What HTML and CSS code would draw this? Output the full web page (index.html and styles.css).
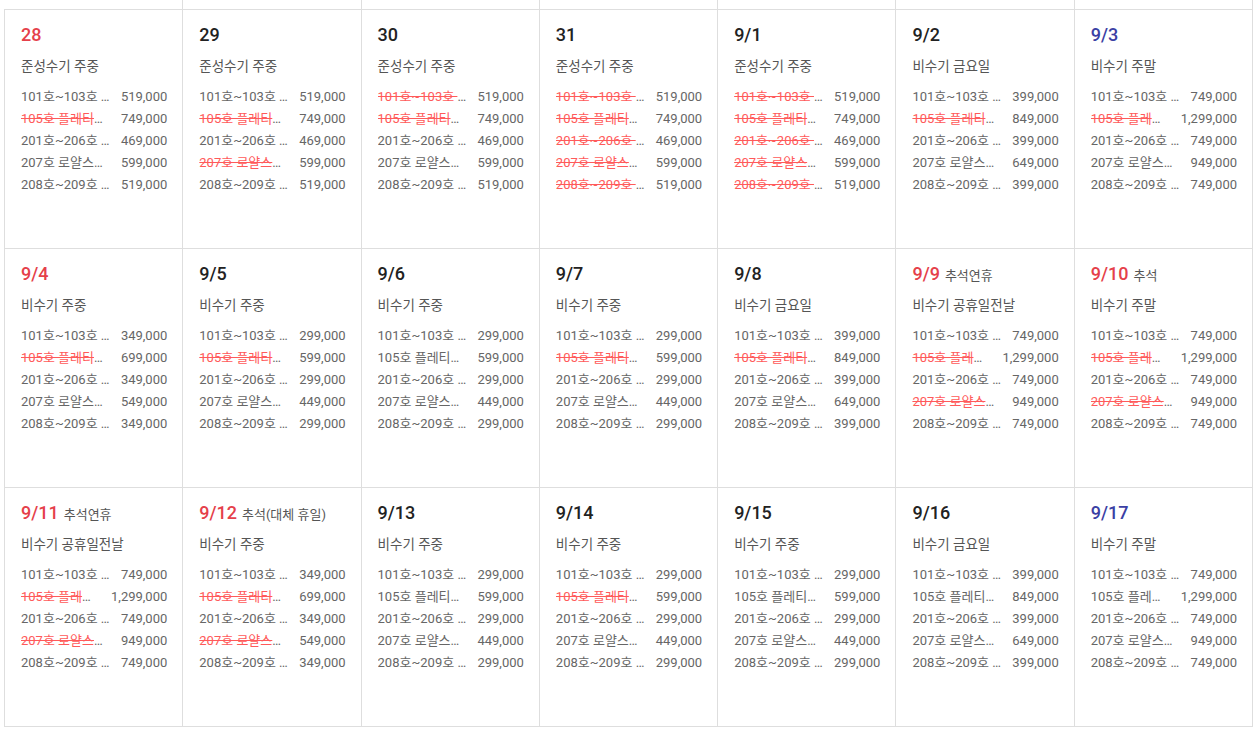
FILE: index.html
```html
<!DOCTYPE html>
<html lang="ko">
<head>
<meta charset="utf-8">
<title>요금 달력</title>
<link rel="stylesheet" href="styles.css">
</head>
<body>
<div class="calendar">
  <div class="strip"><span></span><span></span><span></span><span></span><span></span><span></span><span></span></div>
  <div class="grid">
    <!-- week 1 -->
    <div class="cell">
      <div class="day"><span class="num sun">28</span></div>
      <div class="season">준성수기 주중</div>
      <ul class="rates">
        <li><span class="room">101호~103호 스탠다드</span><span class="price">519,000</span></li>
        <li><span class="room"><s>105호 플레티넘 스위트</s></span><span class="price">749,000</span></li>
        <li><span class="room">201호~206호 스탠다드</span><span class="price">469,000</span></li>
        <li><span class="room">207호 로얄스위트</span><span class="price">599,000</span></li>
        <li><span class="room">208호~209호 패밀리</span><span class="price">519,000</span></li>
      </ul>
    </div>
    <div class="cell">
      <div class="day"><span class="num">29</span></div>
      <div class="season">준성수기 주중</div>
      <ul class="rates">
        <li><span class="room">101호~103호 스탠다드</span><span class="price">519,000</span></li>
        <li><span class="room"><s>105호 플레티넘 스위트</s></span><span class="price">749,000</span></li>
        <li><span class="room">201호~206호 스탠다드</span><span class="price">469,000</span></li>
        <li><span class="room"><s>207호 로얄스위트</s></span><span class="price">599,000</span></li>
        <li><span class="room">208호~209호 패밀리</span><span class="price">519,000</span></li>
      </ul>
    </div>
    <div class="cell">
      <div class="day"><span class="num">30</span></div>
      <div class="season">준성수기 주중</div>
      <ul class="rates">
        <li><span class="room"><s>101호~103호 스탠다드</s></span><span class="price">519,000</span></li>
        <li><span class="room"><s>105호 플레티넘 스위트</s></span><span class="price">749,000</span></li>
        <li><span class="room">201호~206호 스탠다드</span><span class="price">469,000</span></li>
        <li><span class="room">207호 로얄스위트</span><span class="price">599,000</span></li>
        <li><span class="room">208호~209호 패밀리</span><span class="price">519,000</span></li>
      </ul>
    </div>
    <div class="cell">
      <div class="day"><span class="num">31</span></div>
      <div class="season">준성수기 주중</div>
      <ul class="rates">
        <li><span class="room"><s>101호~103호 스탠다드</s></span><span class="price">519,000</span></li>
        <li><span class="room"><s>105호 플레티넘 스위트</s></span><span class="price">749,000</span></li>
        <li><span class="room"><s>201호~206호 스탠다드</s></span><span class="price">469,000</span></li>
        <li><span class="room"><s>207호 로얄스위트</s></span><span class="price">599,000</span></li>
        <li><span class="room"><s>208호~209호 패밀리</s></span><span class="price">519,000</span></li>
      </ul>
    </div>
    <div class="cell">
      <div class="day"><span class="num">9/1</span></div>
      <div class="season">준성수기 주중</div>
      <ul class="rates">
        <li><span class="room"><s>101호~103호 스탠다드</s></span><span class="price">519,000</span></li>
        <li><span class="room"><s>105호 플레티넘 스위트</s></span><span class="price">749,000</span></li>
        <li><span class="room"><s>201호~206호 스탠다드</s></span><span class="price">469,000</span></li>
        <li><span class="room"><s>207호 로얄스위트</s></span><span class="price">599,000</span></li>
        <li><span class="room"><s>208호~209호 패밀리</s></span><span class="price">519,000</span></li>
      </ul>
    </div>
    <div class="cell">
      <div class="day"><span class="num">9/2</span></div>
      <div class="season">비수기 금요일</div>
      <ul class="rates">
        <li><span class="room">101호~103호 스탠다드</span><span class="price">399,000</span></li>
        <li><span class="room"><s>105호 플레티넘 스위트</s></span><span class="price">849,000</span></li>
        <li><span class="room">201호~206호 스탠다드</span><span class="price">399,000</span></li>
        <li><span class="room">207호 로얄스위트</span><span class="price">649,000</span></li>
        <li><span class="room">208호~209호 패밀리</span><span class="price">399,000</span></li>
      </ul>
    </div>
    <div class="cell">
      <div class="day"><span class="num sat">9/3</span></div>
      <div class="season">비수기 주말</div>
      <ul class="rates">
        <li><span class="room">101호~103호 스탠다드</span><span class="price">749,000</span></li>
        <li><span class="room"><s>105호 플레티넘 스위트</s></span><span class="price">1,299,000</span></li>
        <li><span class="room">201호~206호 스탠다드</span><span class="price">749,000</span></li>
        <li><span class="room">207호 로얄스위트</span><span class="price">949,000</span></li>
        <li><span class="room">208호~209호 패밀리</span><span class="price">749,000</span></li>
      </ul>
    </div>

    <!-- week 2 -->
    <div class="cell">
      <div class="day"><span class="num sun">9/4</span></div>
      <div class="season">비수기 주중</div>
      <ul class="rates">
        <li><span class="room">101호~103호 스탠다드</span><span class="price">349,000</span></li>
        <li><span class="room"><s>105호 플레티넘 스위트</s></span><span class="price">699,000</span></li>
        <li><span class="room">201호~206호 스탠다드</span><span class="price">349,000</span></li>
        <li><span class="room">207호 로얄스위트</span><span class="price">549,000</span></li>
        <li><span class="room">208호~209호 패밀리</span><span class="price">349,000</span></li>
      </ul>
    </div>
    <div class="cell">
      <div class="day"><span class="num">9/5</span></div>
      <div class="season">비수기 주중</div>
      <ul class="rates">
        <li><span class="room">101호~103호 스탠다드</span><span class="price">299,000</span></li>
        <li><span class="room"><s>105호 플레티넘 스위트</s></span><span class="price">599,000</span></li>
        <li><span class="room">201호~206호 스탠다드</span><span class="price">299,000</span></li>
        <li><span class="room">207호 로얄스위트</span><span class="price">449,000</span></li>
        <li><span class="room">208호~209호 패밀리</span><span class="price">299,000</span></li>
      </ul>
    </div>
    <div class="cell">
      <div class="day"><span class="num">9/6</span></div>
      <div class="season">비수기 주중</div>
      <ul class="rates">
        <li><span class="room">101호~103호 스탠다드</span><span class="price">299,000</span></li>
        <li><span class="room">105호 플레티넘 스위트</span><span class="price">599,000</span></li>
        <li><span class="room">201호~206호 스탠다드</span><span class="price">299,000</span></li>
        <li><span class="room">207호 로얄스위트</span><span class="price">449,000</span></li>
        <li><span class="room">208호~209호 패밀리</span><span class="price">299,000</span></li>
      </ul>
    </div>
    <div class="cell">
      <div class="day"><span class="num">9/7</span></div>
      <div class="season">비수기 주중</div>
      <ul class="rates">
        <li><span class="room">101호~103호 스탠다드</span><span class="price">299,000</span></li>
        <li><span class="room"><s>105호 플레티넘 스위트</s></span><span class="price">599,000</span></li>
        <li><span class="room">201호~206호 스탠다드</span><span class="price">299,000</span></li>
        <li><span class="room">207호 로얄스위트</span><span class="price">449,000</span></li>
        <li><span class="room">208호~209호 패밀리</span><span class="price">299,000</span></li>
      </ul>
    </div>
    <div class="cell">
      <div class="day"><span class="num">9/8</span></div>
      <div class="season">비수기 금요일</div>
      <ul class="rates">
        <li><span class="room">101호~103호 스탠다드</span><span class="price">399,000</span></li>
        <li><span class="room"><s>105호 플레티넘 스위트</s></span><span class="price">849,000</span></li>
        <li><span class="room">201호~206호 스탠다드</span><span class="price">399,000</span></li>
        <li><span class="room">207호 로얄스위트</span><span class="price">649,000</span></li>
        <li><span class="room">208호~209호 패밀리</span><span class="price">399,000</span></li>
      </ul>
    </div>
    <div class="cell">
      <div class="day"><span class="num sun">9/9</span><span class="holiday">추석연휴</span></div>
      <div class="season">비수기 공휴일전날</div>
      <ul class="rates">
        <li><span class="room">101호~103호 스탠다드</span><span class="price">749,000</span></li>
        <li><span class="room"><s>105호 플레티넘 스위트</s></span><span class="price">1,299,000</span></li>
        <li><span class="room">201호~206호 스탠다드</span><span class="price">749,000</span></li>
        <li><span class="room"><s>207호 로얄스위트</s></span><span class="price">949,000</span></li>
        <li><span class="room">208호~209호 패밀리</span><span class="price">749,000</span></li>
      </ul>
    </div>
    <div class="cell">
      <div class="day"><span class="num sun">9/10</span><span class="holiday">추석</span></div>
      <div class="season">비수기 주말</div>
      <ul class="rates">
        <li><span class="room">101호~103호 스탠다드</span><span class="price">749,000</span></li>
        <li><span class="room"><s>105호 플레티넘 스위트</s></span><span class="price">1,299,000</span></li>
        <li><span class="room">201호~206호 스탠다드</span><span class="price">749,000</span></li>
        <li><span class="room"><s>207호 로얄스위트</s></span><span class="price">949,000</span></li>
        <li><span class="room">208호~209호 패밀리</span><span class="price">749,000</span></li>
      </ul>
    </div>

    <!-- week 3 -->
    <div class="cell">
      <div class="day"><span class="num sun">9/11</span><span class="holiday">추석연휴</span></div>
      <div class="season">비수기 공휴일전날</div>
      <ul class="rates">
        <li><span class="room">101호~103호 스탠다드</span><span class="price">749,000</span></li>
        <li><span class="room"><s>105호 플레티넘 스위트</s></span><span class="price">1,299,000</span></li>
        <li><span class="room">201호~206호 스탠다드</span><span class="price">749,000</span></li>
        <li><span class="room"><s>207호 로얄스위트</s></span><span class="price">949,000</span></li>
        <li><span class="room">208호~209호 패밀리</span><span class="price">749,000</span></li>
      </ul>
    </div>
    <div class="cell">
      <div class="day"><span class="num sun">9/12</span><span class="holiday">추석(대체 휴일)</span></div>
      <div class="season">비수기 주중</div>
      <ul class="rates">
        <li><span class="room">101호~103호 스탠다드</span><span class="price">349,000</span></li>
        <li><span class="room"><s>105호 플레티넘 스위트</s></span><span class="price">699,000</span></li>
        <li><span class="room">201호~206호 스탠다드</span><span class="price">349,000</span></li>
        <li><span class="room"><s>207호 로얄스위트</s></span><span class="price">549,000</span></li>
        <li><span class="room">208호~209호 패밀리</span><span class="price">349,000</span></li>
      </ul>
    </div>
    <div class="cell">
      <div class="day"><span class="num">9/13</span></div>
      <div class="season">비수기 주중</div>
      <ul class="rates">
        <li><span class="room">101호~103호 스탠다드</span><span class="price">299,000</span></li>
        <li><span class="room">105호 플레티넘 스위트</span><span class="price">599,000</span></li>
        <li><span class="room">201호~206호 스탠다드</span><span class="price">299,000</span></li>
        <li><span class="room">207호 로얄스위트</span><span class="price">449,000</span></li>
        <li><span class="room">208호~209호 패밀리</span><span class="price">299,000</span></li>
      </ul>
    </div>
    <div class="cell">
      <div class="day"><span class="num">9/14</span></div>
      <div class="season">비수기 주중</div>
      <ul class="rates">
        <li><span class="room">101호~103호 스탠다드</span><span class="price">299,000</span></li>
        <li><span class="room"><s>105호 플레티넘 스위트</s></span><span class="price">599,000</span></li>
        <li><span class="room">201호~206호 스탠다드</span><span class="price">299,000</span></li>
        <li><span class="room">207호 로얄스위트</span><span class="price">449,000</span></li>
        <li><span class="room">208호~209호 패밀리</span><span class="price">299,000</span></li>
      </ul>
    </div>
    <div class="cell">
      <div class="day"><span class="num">9/15</span></div>
      <div class="season">비수기 주중</div>
      <ul class="rates">
        <li><span class="room">101호~103호 스탠다드</span><span class="price">299,000</span></li>
        <li><span class="room">105호 플레티넘 스위트</span><span class="price">599,000</span></li>
        <li><span class="room">201호~206호 스탠다드</span><span class="price">299,000</span></li>
        <li><span class="room">207호 로얄스위트</span><span class="price">449,000</span></li>
        <li><span class="room">208호~209호 패밀리</span><span class="price">299,000</span></li>
      </ul>
    </div>
    <div class="cell">
      <div class="day"><span class="num">9/16</span></div>
      <div class="season">비수기 금요일</div>
      <ul class="rates">
        <li><span class="room">101호~103호 스탠다드</span><span class="price">399,000</span></li>
        <li><span class="room">105호 플레티넘 스위트</span><span class="price">849,000</span></li>
        <li><span class="room">201호~206호 스탠다드</span><span class="price">399,000</span></li>
        <li><span class="room">207호 로얄스위트</span><span class="price">649,000</span></li>
        <li><span class="room">208호~209호 패밀리</span><span class="price">399,000</span></li>
      </ul>
    </div>
    <div class="cell">
      <div class="day"><span class="num sat">9/17</span></div>
      <div class="season">비수기 주말</div>
      <ul class="rates">
        <li><span class="room">101호~103호 스탠다드</span><span class="price">749,000</span></li>
        <li><span class="room">105호 플레티넘 스위트</span><span class="price">1,299,000</span></li>
        <li><span class="room">201호~206호 스탠다드</span><span class="price">749,000</span></li>
        <li><span class="room">207호 로얄스위트</span><span class="price">949,000</span></li>
        <li><span class="room">208호~209호 패밀리</span><span class="price">749,000</span></li>
      </ul>
    </div>
  </div>
</div>
</body>
</html>
```

FILE: styles.css
```css
* { box-sizing: border-box; }

html, body {
  margin: 0;
  padding: 0;
  background: #fff;
}

body {
  font-family: Roboto, "Noto Sans CJK KR", sans-serif;
  color: #666;
}

.calendar {
  margin-left: 4px;
  width: 1249px;
}

.strip {
  display: grid;
  grid-template-columns: repeat(7, 1fr);
  height: 9px;
  padding-left: 1px;
}

.strip span {
  border-right: 1px solid #dedede;
}

.grid {
  display: grid;
  grid-template-columns: repeat(7, 1fr);
  border-top: 1px solid #dedede;
  border-left: 1px solid #dedede;
}

.cell {
  height: 239px;
  min-width: 0;
  border-right: 1px solid #dedede;
  border-bottom: 1px solid #dedede;
  padding: 12px 15px 0 16px;
}

.day {
  display: flex;
  align-items: baseline;
  gap: 5px;
  height: 25px;
  line-height: 25px;
}

.num {
  font-size: 18px;
  font-weight: 500;
  color: #222;
}

.num.sun { color: #e5404a; }
.num.sat { color: #3b40a4; }

.holiday {
  font-size: 13px;
  color: #555;
}

.season {
  margin-top: 9px;
  font-size: 13.5px;
  line-height: 20px;
  color: #555;
}

.rates {
  list-style: none;
  margin: 10px 0 0;
  padding: 0;
}

.rates li {
  display: flex;
  gap: 10px;
  font-size: 13px;
  line-height: 22px;
  height: 22px;
}

.room {
  flex: 1;
  min-width: 0;
  overflow: hidden;
  white-space: nowrap;
  text-overflow: ellipsis;
  color: #666;
}

.room s {
  color: #ff5a5a;
  text-decoration: line-through;
}

.price {
  flex: none;
  color: #666;
}
```
